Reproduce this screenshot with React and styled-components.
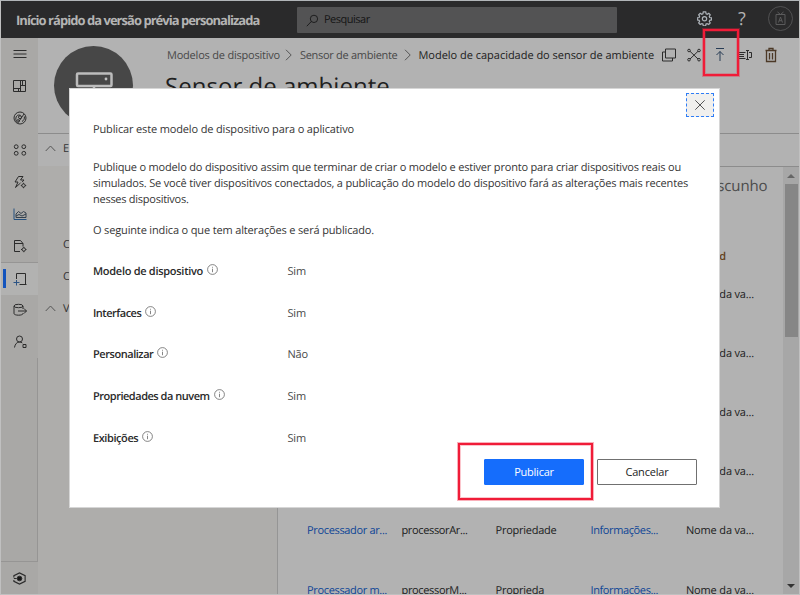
import React from 'react';
import styled, { createGlobalStyle, css } from 'styled-components';

const GlobalStyle = createGlobalStyle`
  * { box-sizing: border-box; }
  body {
    margin: 0;
    overflow: hidden;
    font: 400 11px/16px "Open Sans", "Noto Sans", sans-serif;
    text-rendering: geometricPrecision;
    color: #262626;
  }
`;

const tracking = css`letter-spacing: ${(p) => p.$track || 0}px;`;

const Window = styled.div`
  position: relative;
  display: flex;
  flex-direction: column;
  width: 800px;
  height: 595px;
  border: 1px solid #c0c0c0;
  border-top-color: #b1b5b8;
  background: #b2b2b2;
  overflow: hidden;
`;

const Header = styled.header`
  display: flex;
  align-items: center;
  flex: 0 0 37px;
  padding-left: 15px;
  background: #2a2a2b;
`;
const AppTitle = styled.h1`
  flex: 0 0 281px;
  margin: 0;
  font-size: 13px;
  line-height: 18px;
  font-weight: 700;
  color: #b4b4b4;
  white-space: nowrap;
  ${tracking}
`;
const SearchBox = styled.div`
  display: flex;
  align-items: center;
  width: 320px;
  height: 26px;
  padding: 1px 0 0 9px;
  gap: 5px;
  border-radius: 1px;
  background: #535354;
  color: #151515;
  ${tracking}
`;
const HeaderTools = styled.div`
  display: flex;
  align-items: center;
  margin: -2px 0 0 80px;
`;
const Help = styled.span`
  width: 14px;
  margin: 0 18px 0 23px;
  font: 400 18px/20px "Open Sans", sans-serif;
  text-align: center;
  color: #b4b4b4;
`;

const Body = styled.div`
  display: flex;
  flex: 1;
  min-height: 0;
`;
const Rail = styled.nav`
  display: flex;
  flex-direction: column;
  flex: 0 0 37px;
  background: #a9a8a6;
`;
const RailItem = styled.div`
  display: flex;
  align-items: center;
  justify-content: center;
  flex: 0 0 32px;
`;
const ActiveRailItem = styled(RailItem)`
  flex-basis: 33px;
  margin-bottom: -1px;
  padding: 0 0 1px 0;
  border-top: 1px solid #969594;
  background: linear-gradient(#1354bd, #1354bd) 2px 6px / 3px 19px no-repeat, #b2b2b1;
`;
const RailSpacer = styled.div`
  flex: 1;
  border-right: 1px solid #969594;
  border-bottom: 1px solid #969594;
`;

const Main = styled.main`
  display: flex;
  flex-direction: column;
  flex: 1;
  min-width: 0;
`;
const DeviceHeader = styled.section`
  display: flex;
  flex: 0 0 96px;
  padding-left: 16px;
  border-bottom: 1px solid #8c8c8c;
`;
const DeviceAvatar = styled.div`
  display: flex;
  justify-content: center;
  flex: 0 0 79px;
  height: 79px;
  margin-top: 8px;
  padding: 25px 0 0 1px;
  border-radius: 50%;
  background: #474747;
`;
const DeviceInfo = styled.div`
  display: flex;
  flex-direction: column;
  margin-left: 34px;
`;
const Breadcrumb = styled.div`
  display: flex;
  align-items: center;
  height: 16px;
  margin-top: 9px;
  white-space: nowrap;
`;
const Crumb = styled.span`
  width: ${(p) => p.$width}px;
  padding-top: 1px;
  color: ${(p) => (p.$current ? '#1c1c1c' : '#484848')};
  ${tracking}
`;
const CrumbChevron = styled.svg`
  flex: none;
  width: 20px;
  height: 12px;
`;
const Actions = styled.div`
  display: flex;
  align-items: center;
  gap: 9.5px;
  margin-left: 5px;
`;
const DeviceTitle = styled.h2`
  margin: 8px 0 0 -2px;
  font-size: 24px;
  line-height: 32px;
  font-weight: 400;
  white-space: nowrap;
  color: #202020;
  ${tracking}
`;

const Workspace = styled.div`
  display: flex;
  flex: 1;
  min-height: 0;
`;
const Tree = styled.aside`
  display: flex;
  flex-direction: column;
  flex: 0 0 240px;
  border-right: 1px solid #959595;
  background: #aeadab;
`;
const TreeRow = styled.div`
  display: flex;
  align-items: center;
  height: 32px;
  margin-top: ${(p) => p.$gap || 0}px;
  padding: 0 0 3px ${(p) => (p.$leaf ? 25 : 7)}px;
  gap: 7px;
  color: #333;
  background: ${(p) => (p.$header ? '#b2b2b2' : 'transparent')};
`;
const Detail = styled.section`
  display: flex;
  flex-direction: column;
  flex: 1;
  min-width: 0;
`;
const DetailBar = styled.div`
  flex: 0 0 33px;
  border-bottom: 1px solid #8c8c8c;
`;
const DetailBody = styled.div`
  display: flex;
  flex: 1;
  min-height: 0;
`;
const Content = styled.div`
  display: flex;
  flex-direction: column;
  flex: 1;
  overflow: hidden;
`;
const DraftLabel = styled.div`
  margin: 7px 15.5px 0 0;
  font-size: 15px;
  line-height: 24px;
  text-align: right;
  color: #4b4b4b;
  ${tracking}
`;
const DefaultMark = styled.div`
  margin: 51px 57px 0 0;
  line-height: 16px;
  font-weight: 600;
  text-align: right;
  color: #65431d;
`;
const Rows = styled.div`
  display: grid;
  grid-auto-rows: 59.2px;
`;
const Row = styled.div`
  display: grid;
  grid-template-columns: 94.5px 94px 95px 95.5px 90px;
  align-items: center;
  padding-left: 29px;
  white-space: nowrap;
`;
const Cell = styled.span`
  color: ${(p) => (p.$link ? '#0e4596' : '#202020')};
  ${tracking}
`;
const Scrollbar = styled.div`
  display: flex;
  flex-direction: column;
  align-items: center;
  justify-content: space-between;
  flex: 0 0 16px;
  padding: 7px 0 6px;
  background: #a7a7a7;
`;
const Thumb = styled.div`
  width: 13px;
  height: 153px;
  margin: 6px 0 auto 1px;
  background: #868686;
`;
const Triangle = styled.svg`
  flex: none;
  width: 8px;
  height: 4px;
`;

const Dialog = styled.div`
  position: absolute;
  left: 68px;
  top: 87px;
  display: flex;
  flex-direction: column;
  width: 651px;
  height: 420px;
  padding: 0 22px 22px 23px;
  border: 1px solid #d6d6d6;
  background: #fff;
  color: #363636;
`;
const CloseButton = styled.button`
  display: flex;
  align-items: center;
  justify-content: center;
  align-self: flex-end;
  flex: none;
  width: 28px;
  height: 24px;
  margin: 4px -17px 0 0;
  padding: 0;
  border: 1.5px dashed #2f7df6;
  background: #f1f0ee;
`;
const Line = styled.p`
  margin: ${(p) => p.$gap || 0}px 0 0;
  line-height: 16px;
  white-space: nowrap;
  ${tracking}
`;
const Summary = styled.dl`
  display: grid;
  grid-template-columns: 194.5px 1fr;
  grid-auto-rows: 41.7px;
  height: 194px;
  margin: 20px 0 0;
`;
const Term = styled.dt`
  display: flex;
  align-items: center;
  height: 26px;
  gap: 4px;
  font-weight: 600;
  color: #2a2a2a;
  white-space: nowrap;
  ${tracking}
`;
const Value = styled.dd`
  display: flex;
  align-items: center;
  height: 26px;
  margin: 0;
  color: #484848;
  ${tracking}
`;
const InfoSvg = styled.svg`
  flex: none;
  width: 11px;
  height: 11px;
  margin-top: -5px;
`;
const Footer = styled.footer`
  display: flex;
  justify-content: flex-end;
  gap: 13px;
  margin-top: auto;
`;
const Button = styled.button`
  width: 100px;
  height: 26px;
  padding: 0;
  font: inherit;
  color: ${(p) => (p.$primary ? '#fff' : '#222')};
  border: 1px solid ${(p) => (p.$primary ? '#156dfc' : '#707070')};
  border-radius: 1px;
  background: ${(p) => (p.$primary ? '#156dfc' : '#fff')};
  ${tracking}
`;
const Highlight = styled.div`
  position: absolute;
  left: ${(p) => p.$x}px;
  top: ${(p) => p.$y}px;
  width: ${(p) => p.$w}px;
  height: ${(p) => p.$h}px;
  border: 2px solid #f01c38;
  box-shadow: 0 0 0 1px rgba(240, 28, 56, 0.35), inset 0 0 0 1px rgba(240, 28, 56, 0.25);
`;

const Icon = ({ children, size = 16, color = '#2c2c2c', width = 1 }) => (
  <svg width={size} height={size} viewBox="0 0 16 16" fill="none" stroke={color} strokeWidth={width}>
    {children}
  </svg>
);

const railIcons = [
  <path d="M1.500 4.500h13M1.500 8h13M1.500 11.500h13" />,
  <path d="M1.500 2.500h12v11h-12zM8.500 2.500v11M1.500 10.500h7M8.500 7.500h5M10.500 2.500v5M6.500 10.500v3" />,
  <><circle cx="8" cy="8" r="6" /><path d="M12 4 6.800 11.500M4 10.800c-.8-4 1-6.600 4.400-5.500M12.400 6.500c.3 2.400-.6 4-2.400 5" /><circle cx="8" cy="7.200" r="1.500" /><circle cx="6" cy="11" r="1.300" /></>,
  <><circle cx="4.200" cy="4.700" r="1.900" /><circle cx="11.800" cy="4.700" r="1.900" /><circle cx="4.200" cy="11.300" r="1.900" /><circle cx="11.800" cy="11.300" r="1.900" /></>,
  <><path d="M11 2.500H6.500L3 8h3l-2.500 5.500L8.500 9M11 2.500 8.500 6H12l-2 2.200" /><circle cx="11.500" cy="11.500" r="1.700" /><path d="M11.500 8.800v1M11.500 13.200v1M8.800 11.500h1M13.200 11.500h1" /></>,
  <><path d="M2 2.500v11h12.500" stroke="#24507f" /><path d="M4 11.500V8l2.500-2.500L9 7.500l2.500-2L14 7v4.500zM4 10l3-1.500 3 1.500 4-2" stroke="#34404d" /></>,
  <><path d="M8 13.500H2.500v-11h6l2.500 3v3M2.500 5.500H11" /><circle cx="11.800" cy="11.500" r="1.700" /><path d="M11.800 8.800v1M11.800 13.200v1M9 11.500h1M13.500 11.500h1" /></>,
  <><path d="M4.500 8V2.500h9v11H7.500" /><path d="M12 13.500h2.500" /><path d="M4.500 9v5.500M1.500 11.500h6" stroke="#2c5484" /></>,
  <><ellipse cx="6.500" cy="4" rx="4.500" ry="1.700" /><path d="M2 4v7.500c0 1 2 1.700 4.500 1.700S11 12.500 11 11.500V11M11 4v3M6 9h8.500M12 6.500 14.500 9 12 11.500" /></>,
  <><circle cx="7.500" cy="5" r="3" /><path d="M2.500 13.500C3 10 5 8 7.500 8c1.200 0 2 .3 2.800 1" /><path d="M11 10.500h3v3h-3z" /></>,
];

const crumbs = [
  ['Modelos de dispositivo', 113, -0.209],
  ['Sensor de ambiente', 98.5, -0.292],
];

const Chevron = () => (
  <CrumbChevron viewBox="0 0 20 12" fill="none" stroke="#555"><path d="m6 .8 5.200 5.200L6 11.200" /></CrumbChevron>
);
const Caret = () => (
  <svg width="11" height="7" viewBox="0 0 11 7" fill="none" stroke="#555"><path d="m.7 6 4.800-5 4.800 5" /></svg>
);
const Info = () => (
  <InfoSvg viewBox="0 0 11 11" fill="none" stroke="#666" strokeWidth=".8"><circle cx="5.500" cy="5.500" r="4.900" /><path d="M5.500 4.700v3.500M5.500 2.800v.9" /></InfoSvg>
);

const lastColumn = ['Nome da va...', -0.161];
const rows = [
  [], [], [], [],
  [['Processador ar...', -0.338], ['processorAr...', -0.358], ['Propriedade', -0.242], ['Informações...', -0.386]],
  [['Processador m...', -0.338], ['processorM...', -0.34], ['Proprieda', -0.242], ['Informações...', -0.386]],
];
const summary = [
  ['Modelo de dispositivo', -0.285, 'Sim'],
  ['Interfaces', -0.5, 'Sim'],
  ['Personalizar', -0.45, 'Não'],
  ['Propriedades da nuvem', -0.48, 'Sim'],
  ['Exibições', -0.42, 'Sim'],
];

export default function App() {
  return (
    <Window>
      <GlobalStyle />
      <Header>
        <AppTitle $track={-0.97}>Início rápido da versão prévia personalizada</AppTitle>
        <SearchBox $track={-0.5}>
          <Icon size={13} color="#111"><circle cx="9.800" cy="6" r="4.500" /><path d="M6.500 9.300 1 15" /></Icon>
          <span>Pesquisar</span>
        </SearchBox>
        <HeaderTools>
          <Icon size={15} color="#adb3b9" width={1.3}>
            <path d="M6.700 1h2.600l.4 2 1.200.5 1.700-1.100 1.500 1.700-1 1.700.5 1.200 1.900.3v2.200l-1.900.4-.5 1.300 1 1.600-1.600 1.600-1.700-1-1.200.5-.4 1.900H6.700l-.4-1.900-1.200-.5-1.700 1-1.600-1.600 1-1.700-.5-1.200-2-.4V7.300l2-.3.5-1.300-1-1.600 1.600-1.700 1.700 1.100L6.300 3z" />
            <circle cx="8" cy="8.300" r="2.300" />
          </Icon>
          <Help>?</Help>
          <svg width="27" height="27" viewBox="0 0 27 27" fill="none" stroke="#5b5b5c">
            <circle cx="13.500" cy="13.500" r="12" strokeWidth=".8" />
            <path d="M9 9.500h9v10H9zM10.500 7l3 2.500 3-2.500M11.500 17.500l2-5.500 2 5.500M12.200 15.700h2.600" />
          </svg>
        </HeaderTools>
      </Header>
      <Body>
        <Rail>
          {railIcons.map((icon, i) => {
            const Item = i === 7 ? ActiveRailItem : RailItem;
            return <Item key={i}><Icon>{icon}</Icon></Item>;
          })}
          <RailSpacer />
          <RailItem>
            <Icon size={15}><path d="M2 7V5l6-3 6 3v6l-6 3-6-3V9.500M2 8h3" strokeWidth="1.200" /><circle cx="8" cy="8" r="2.500" fill="#161616" /></Icon>
          </RailItem>
        </Rail>
        <Main>
          <DeviceHeader>
            <DeviceAvatar>
              <svg width="38" height="30" viewBox="0 0 38 30" fill="none" stroke="#bcbcbc" strokeWidth="2.500">
                <rect x="2" y="2.500" width="34.500" height="12.500" rx="1" />
                <path d="M19 14v10" />
                <circle cx="31" cy="8" r="1.400" fill="#c2c2c2" stroke="none" />
              </svg>
            </DeviceAvatar>
            <DeviceInfo>
              <Breadcrumb>
                {crumbs.map(([label, width, track]) => (
                  <React.Fragment key={label}>
                    <Crumb $width={width} $track={track}>{label}</Crumb>
                    <Chevron />
                  </React.Fragment>
                ))}
                <Crumb $width={237} $track={-0.02} $current>Modelo de capacidade do sensor de ambiente</Crumb>
                <Actions>
                  <Icon><path d="M4.500 2h10v9h-10zM4.500 5h-3v9h10v-3" /></Icon>
                  <Icon><path d="M4 4.300 12 12M12 4.300 4 12" /><circle cx="3" cy="3.500" r="1.300" /><circle cx="13" cy="3.500" r="1.300" /><circle cx="3" cy="12.700" r="1.300" /><circle cx="13" cy="12.700" r="1.300" /></Icon>
                  <Icon color="#283c55"><path d="M4 1.500h8M8 14V4.500M4.500 8 8 4.500 11.500 8" /></Icon>
                  <Icon><path d="M2 7.500h5M2 9.500h5M8.500 5.500H1M8.500 11.500H1M10.500 3.500v9M9 3.500h3M9 12.500h3M12 5.500h2.500v5H12" /></Icon>
                  <Icon color="#4c3927"><path d="M2.500 3.500h11M6 3.500v-2h4v2M3.500 3.500v11h9v-11M6.500 6v6.500M9.500 6v6.500" strokeWidth="1.300" /></Icon>
                </Actions>
              </Breadcrumb>
              <DeviceTitle $track={0.03}>Sensor de ambiente</DeviceTitle>
            </DeviceInfo>
          </DeviceHeader>
          <Workspace>
            <Tree>
              <TreeRow $header><Caret />E</TreeRow>
              <TreeRow $leaf $gap={64}>C</TreeRow>
              <TreeRow $leaf>C</TreeRow>
              <TreeRow><Caret />V</TreeRow>
            </Tree>
            <Detail>
              <DetailBar />
              <DetailBody>
                <Content>
                  <DraftLabel $track={-0.1}>Rascunho</DraftLabel>
                  <DefaultMark>d</DefaultMark>
                  <Rows>
                    {rows.map((cells, i) => (
                      <Row key={i}>
                        {[0, 1, 2, 3].map((c) => (
                          <Cell key={c} $link={c === 0 || c === 3} $track={cells[c]?.[1]}>{cells[c]?.[0]}</Cell>
                        ))}
                        <Cell $track={lastColumn[1]}>{lastColumn[0]}</Cell>
                      </Row>
                    ))}
                  </Rows>
                </Content>
                <Scrollbar>
                  <Triangle viewBox="0 0 8 4"><path d="M4 0 8 4H0z" fill="#666" /></Triangle>
                  <Thumb />
                  <Triangle viewBox="0 0 8 4"><path d="M0 0h8L4 4z" fill="#333" /></Triangle>
                </Scrollbar>
              </DetailBody>
            </Detail>
          </Workspace>
        </Main>
      </Body>
      <Dialog role="dialog">
        <CloseButton aria-label="Fechar">
          <svg width="10" height="10" viewBox="0 0 10 10" stroke="#555"><path d="m.3.3 9.400 9.400M9.700.3.3 9.700" /></svg>
        </CloseButton>
        <Line $gap={5} $track={-0.144}>Publicar este modelo de dispositivo para o aplicativo</Line>
        <Line $gap={22} $track={-0.185}>Publique o modelo do dispositivo assim que terminar de criar o modelo e estiver pronto para criar dispositivos reais ou</Line>
        <Line $track={-0.18}>simulados. Se você tiver dispositivos conectados, a publicação do modelo do dispositivo fará as alterações mais recentes</Line>
        <Line $track={-0.26}>nesses dispositivos.</Line>
        <Line $gap={15} $track={-0.151}>O seguinte indica o que tem alterações e será publicado.</Line>
        <Summary>
          {summary.map(([label, track, value]) => (
            <React.Fragment key={label}>
              <Term $track={track}>{label}<Info /></Term>
              <Value $track={-0.2}>{value}</Value>
            </React.Fragment>
          ))}
        </Summary>
        <Footer>
          <Button $primary $track={-0.253}>Publicar</Button>
          <Button $track={-0.202}>Cancelar</Button>
        </Footer>
      </Dialog>
      <Highlight $x={702} $y={28} $w={36} $h={47} />
      <Highlight $x={457} $y={442} $w={135} $h={57} />
    </Window>
  );
}
